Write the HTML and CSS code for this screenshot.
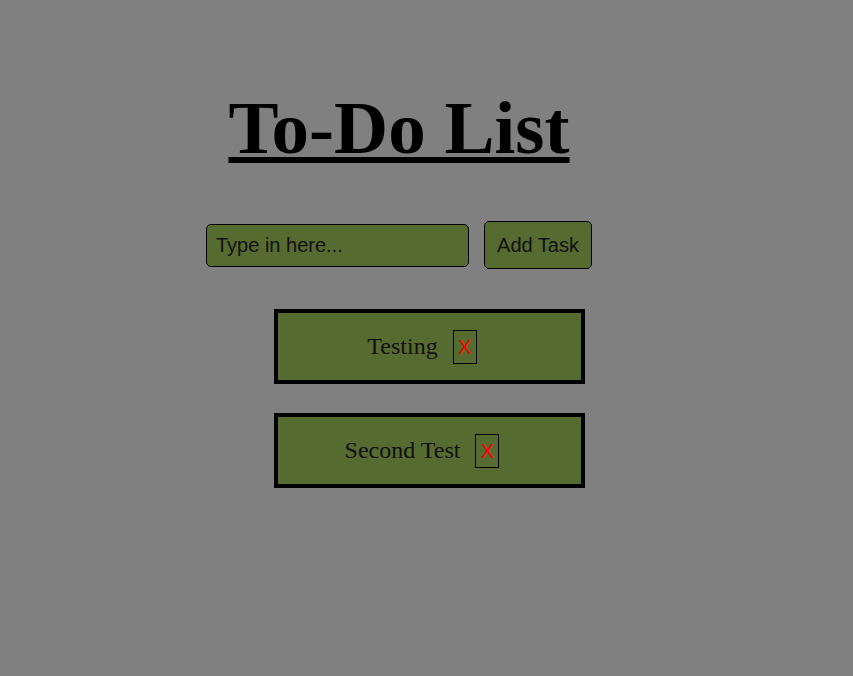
FILE: index.html
```html
<!DOCTYPE html>
<html lang="en">
<head>
<meta charset="utf-8">
<title>To-Do List</title>
<link rel="stylesheet" href="styles.css">
</head>
<body>
<main class="app">
  <header class="top">
    <h1 class="title">To-Do List</h1>
    <form class="entry">
      <input class="entry-input" type="text" placeholder="Type in here...">
      <button class="entry-btn" type="button">Add Task</button>
    </form>
  </header>
  <ul class="tasks">
    <li class="task"><span class="task-text">Testing</span><button class="task-del" type="button">X</button></li>
    <li class="task"><span class="task-text">Second Test</span><button class="task-del" type="button">X</button></li>
  </ul>
</main>
</body>
</html>
```

FILE: styles.css
```css
html, body {
  margin: 0;
  padding: 0;
  background: #808080;
}

body {
  width: 853px;
  height: 676px;
  overflow: hidden;
}

.app {
  display: flex;
  flex-direction: column;
  align-items: center;
}

.top {
  display: flex;
  flex-direction: column;
  align-items: center;
  margin-right: 55px;
}

.title {
  margin: 85px 0 0;
  font-family: "Liberation Serif", "Times New Roman", serif;
  font-weight: bold;
  font-size: 75px;
  line-height: normal;
  color: #000;
  text-decoration: underline;
  text-decoration-thickness: 6px;
  text-underline-offset: 4px;
}

.entry {
  display: flex;
  align-items: center;
  gap: 15px;
  margin-top: 50px;
}

.entry-input {
  box-sizing: border-box;
  width: 263px;
  height: 43px;
  margin: 0;
  padding: 0 9px;
  border: 1px solid #000;
  border-radius: 5px;
  background: #556b2f;
  font-family: "Liberation Sans", Arial, sans-serif;
  font-size: 20px;
  color: #111;
  outline: none;
}

.entry-input::placeholder {
  color: #111;
  opacity: 1;
}

.entry-btn {
  box-sizing: border-box;
  width: 108px;
  height: 48px;
  margin: 0;
  padding: 0;
  border: 1px solid #000;
  border-radius: 5px;
  background: #556b2f;
  font-family: "Liberation Sans", Arial, sans-serif;
  font-size: 20px;
  color: #111;
}

.tasks {
  list-style: none;
  margin: 40px 0 0 6px;
  padding: 0;
  display: flex;
  flex-direction: column;
  gap: 29px;
}

.task {
  box-sizing: border-box;
  width: 311px;
  height: 75px;
  border: 4px solid #000;
  background: #556b2f;
  display: flex;
  align-items: center;
  justify-content: center;
}

.task-text {
  font-family: "Liberation Serif", "Times New Roman", serif;
  font-size: 24px;
  color: #111;
}

.task-del {
  box-sizing: border-box;
  width: 24px;
  height: 34px;
  margin: 0 15px;
  padding: 0;
  border: 1px solid #000;
  border-radius: 0;
  background: transparent;
  font-family: "Liberation Sans", Arial, sans-serif;
  font-size: 20px;
  color: #ff0000;
  line-height: 1;
}
```
